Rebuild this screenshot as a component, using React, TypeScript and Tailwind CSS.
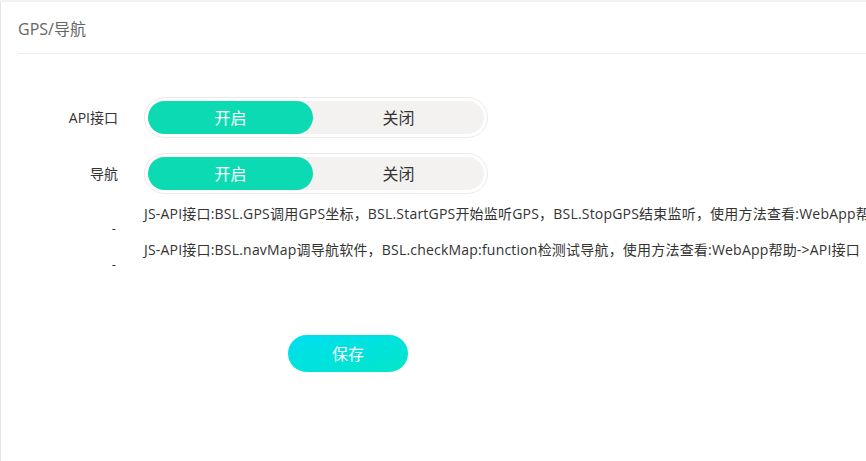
import React from "react";

const font = { fontFamily: '"Open Sans", "Noto Sans CJK SC", sans-serif' };

function Toggle({ on }: { on: boolean }) {
  return (
    <div className="ml-[26px] h-[41px] w-[344px] rounded-full border border-[#ebebeb] bg-white p-[3px]">
      <div className="flex h-full rounded-full bg-[#f3f2f0] text-[16px]">
        <div
          className={
            on
              ? "flex w-[165px] items-center justify-center rounded-full bg-[#0bdab3] text-white"
              : "flex w-[165px] items-center justify-center rounded-full text-[#333]"
          }
        >
          开启
        </div>
        <div className="flex flex-1 items-center justify-center text-[#333]">关闭</div>
      </div>
    </div>
  );
}

export default function App() {
  const rows = [
    { label: "API接口", on: true },
    { label: "导航", on: true },
  ];
  const notes = [
    "JS-API接口:BSL.GPS调用GPS坐标，BSL.StartGPS开始监听GPS，BSL.StopGPS结束监听，使用方法查看:WebApp帮助->API接口",
    "JS-API接口:BSL.navMap调导航软件，BSL.checkMap:function检测试导航，使用方法查看:WebApp帮助->API接口",
  ];

  return (
    <div className="h-[461px] w-[866px] overflow-hidden bg-white" style={font}>
      <div className="h-[2px] bg-[#f2f2f2]" />
      <div className="flex h-[459px]">
        <div className="w-px bg-white" />
        <div className="flex-1 border-l border-[#e6e6e6]">
          <div className="flex h-[51px] items-center pl-[17px] pt-[3px] text-[16px] text-[#666]">GPS/导航</div>
          <div className="ml-[17px] h-px bg-[#eeeeee]" />

          <div className="mt-[43px] flex flex-col gap-[15px]">
            {rows.map((r) => (
              <div key={r.label} className="flex items-center">
                <div className="w-[117px] text-right text-[14px] text-[#333]">{r.label}</div>
                <Toggle on={r.on} />
              </div>
            ))}
          </div>

          <div className="mt-[10px] flex flex-col">
            {notes.map((n, i) => (
              <div key={i} className="flex h-[36px]">
                <div className="w-[117px] pt-[14px] pr-[2px] text-right text-[13px] leading-[20px] text-[#333]">-</div>
                <div className="ml-[26px] whitespace-nowrap text-[14px] leading-[20px] tracking-[0.2px] text-[#333]">{n}</div>
              </div>
            ))}
          </div>

          <div className="mt-[59px] pl-[287px]">
            <button className="h-[37px] w-[120px] rounded-full bg-gradient-to-br from-[#00def0] to-[#06e6c8] text-[16px] text-white">
              保存
            </button>
          </div>
        </div>
      </div>
    </div>
  );
}
